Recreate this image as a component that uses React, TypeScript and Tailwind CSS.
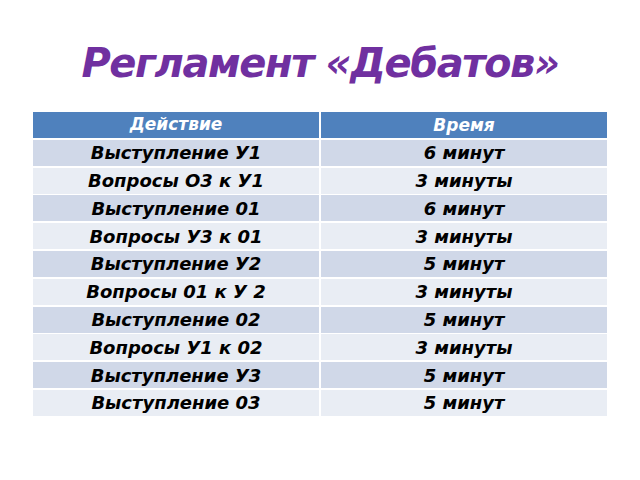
import React from 'react';

const rows: Array<{ action: string, time: string }> = [
  { action: 'Выступление У1', time: '6 минут' },
  { action: 'Вопросы О3 к У1', time: '3 минуты' },
  { action: 'Выступление 01', time: '6 минут' },
  { action: 'Вопросы У3 к 01', time: '3 минуты' },
  { action: 'Выступление У2', time: '5 минут' },
  { action: 'Вопросы 01 к У 2', time: '3 минуты' },
  { action: 'Выступление 02', time: '5 минут' },
  { action: 'Вопросы У1 к 02', time: '3 минуты' },
  { action: 'Выступление У3', time: '5 минут' },
  { action: 'Выступление 03', time: '5 минут' },
];

const App: React.FC = () => {
  return (
    <div className="w-[640px] h-[480px] bg-white flex flex-col items-center font-['DejaVu_Sans',sans-serif] font-bold italic">
      <h1 className="mt-[38px] h-[50px] leading-[50px] text-[40px] tracking-[-1.4px] text-[#7030a0]">
        Регламент «Дебатов»
      </h1>

      <div className="mt-[24px] w-[574px] grid grid-cols-[286px_286px] gap-x-[2px] gap-y-[1.8px] text-[18px]">
        <div className="h-[26px] bg-[#4f81bd] text-white text-[17px] flex items-center justify-center">Действие</div>
        <div className="h-[26px] bg-[#4f81bd] text-white text-[17px] flex items-center justify-center pt-[2px]">Время</div>
        {rows.map((row, i) => (
          <React.Fragment key={row.action}>
            <div className={`h-[26px] flex items-center justify-center text-black ${i % 2 === 0 ? 'bg-[#d0d8e8]' : 'bg-[#e9edf4]'}`}>
              {row.action}
            </div>
            <div className={`h-[26px] flex items-center justify-center text-black ${i % 2 === 0 ? 'bg-[#d0d8e8]' : 'bg-[#e9edf4]'}`}>
              {row.time}
            </div>
          </React.Fragment>
        ))}
      </div>
    </div>
  );
};

export default App;
